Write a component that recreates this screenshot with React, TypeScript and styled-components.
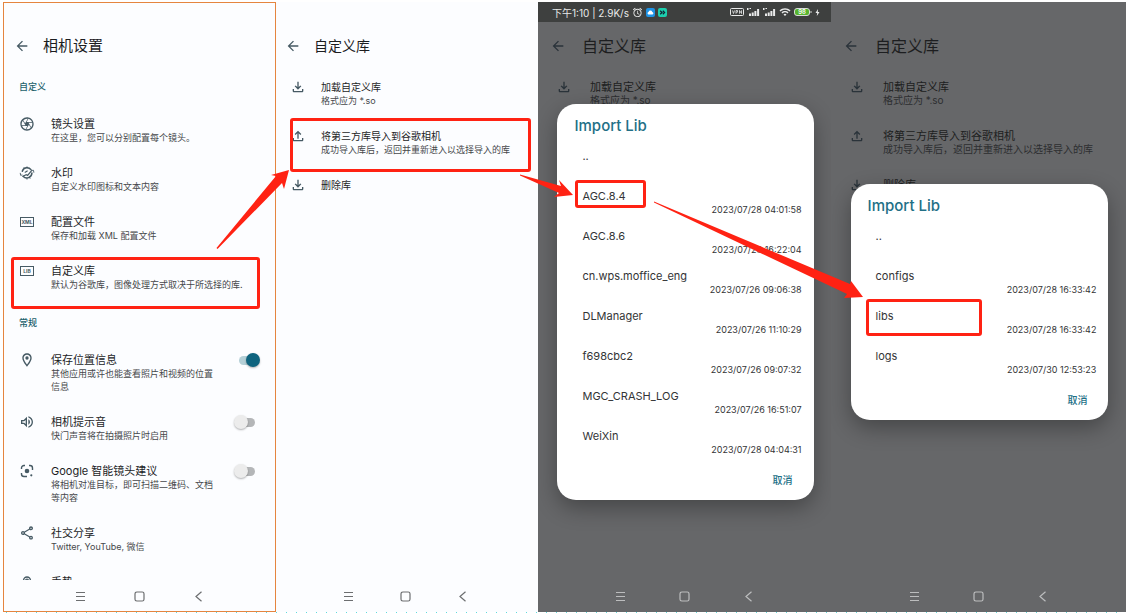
import React, { ReactNode } from "react";
import styled, { createGlobalStyle, ThemeProvider } from "styled-components";
import {
  MdArrowBack,
  MdOutlineCamera,
  MdOutlineFileDownload,
  MdOutlineFileUpload,
  MdOutlineLocationOn,
  MdOutlineShare,
  MdOutlineVolumeUp,
  MdAlarm,
  MdWifi,
} from "react-icons/md";

const RED = "#ff2213";

const GlobalStyle = createGlobalStyle`
  *, *::before, *::after { box-sizing: border-box; }
  html, body { margin: 0; background: #ffffff; }
  body { font-family: Inter, "Noto Sans CJK SC", sans-serif; }
  button { font-family: inherit; padding: 0; border: 0; background: none; cursor: pointer; }
  ul { list-style: none; margin: 0; padding: 0; }
`;

const base = {
  bg: "#fcfdff",
  text: "#1c1d1f",
  sub: "#46484b",
  icon: "#465a64",
  nav: "#6c6e70",
  frame: "transparent",
  titleSize: 14,
  itemSize: 10,
  subSize: 9,
  headPad: 9,
  headGap: 13,
  itemPad: 14,
  itemGap: 15,
  navGap: 46,
  navInset: 4,
};

const dim = {
  ...base,
  bg: "#666769",
  text: "#1d1e20",
  sub: "#2d2e30",
  icon: "#2a333a",
  nav: "#bcbdbe",
  titleSize: 16,
  itemSize: 11,
  subSize: 10,
  headPad: 12,
  headGap: 16,
  itemPad: 18,
  itemGap: 18,
  navGap: 53,
  navInset: 0,
};

const settings = {
  ...base,
  frame: "#e5853f",
  titleSize: 15,
  itemSize: 11,
  headPad: 11,
  itemPad: 16,
  itemGap: 16,
  navGap: 48,
  navInset: 0,
};

type Tone = typeof base;
const t = (key: keyof Tone) => (p: any) => p.theme[key];

const Page = styled.div`
  position: relative;
  display: flex;
  flex-direction: column;
  height: 100vh;
  padding-top: 2px;
`;

const Panels = styled.main`
  flex: 1;
  min-height: 0;
  display: grid;
  grid-template-columns: 273fr 262fr 293fr 295fr;
  grid-template-rows: minmax(0, 1fr);
  padding-left: 3px;
`;

const DottedEdge = styled.div`
  height: 1px;
  background: repeating-linear-gradient(90deg, #fff 0 6px, #5fd9dc 6px 7px, #fff 7px 10px);
`;

const Screen = styled.section`
  position: relative;
  display: flex;
  flex-direction: column;
  min-width: 0;
  overflow: hidden;
  background: ${t("bg")};
  box-shadow: inset 0 0 0 1px ${t("frame")};
`;

const StatusBar = styled.div<{ $shown: boolean }>`
  flex: none;
  height: 20px;
  display: flex;
  align-items: center;
  gap: 3px;
  padding: 0 11px 0 14px;
  background: ${(p) => (p.$shown ? "#3e403f" : "transparent")};
  color: #e9eaea;
  font-size: 10px;
  white-space: nowrap;
`;

const StatusEnd = styled.div`
  display: flex;
  align-items: center;
  gap: 3px;
  margin-left: auto;
`;

const Header = styled.header`
  flex: none;
  height: 47px;
  display: flex;
  align-items: center;
  gap: ${t("headGap")}px;
  padding-left: ${t("headPad")}px;
  color: ${t("icon")};
  button { display: flex; color: inherit; }
`;

const Title = styled.h1`
  margin: 0;
  font-size: ${t("titleSize")}px;
  line-height: 20px;
  font-weight: 400;
  color: ${t("text")};
`;

const Content = styled.div`
  flex: 1;
  min-height: 0;
  overflow: hidden;
  display: flex;
  flex-direction: column;
  gap: 3px;
`;

const Category = styled.h2`
  margin: 0;
  padding-left: 16px;
  font-size: 9px;
  line-height: 35px;
  height: 37px;
  font-weight: 500;
  color: #22616c;
`;

const Row = styled.label`
  display: flex;
  align-items: flex-start;
  gap: ${t("itemGap")}px;
  padding: 11px 15px 11px ${t("itemPad")}px;
  color: ${t("icon")};
`;

const IconSlot = styled.span`
  flex: none;
  width: 16px;
  height: 14px;
  display: flex;
  align-items: center;
  justify-content: center;
  svg { flex: none; }
`;

const RowText = styled.span`
  flex: 1;
  min-width: 0;
  display: block;
`;

const ItemTitle = styled.span`
  display: block;
  font-size: ${t("itemSize")}px;
  line-height: 14px;
  color: ${t("text")};
`;

const ItemSub = styled.span`
  display: block;
  font-size: ${t("subSize")}px;
  line-height: 13px;
  color: ${t("sub")};
`;

const Tag = styled.span`
  width: 14px;
  height: 10px;
  border: 1px solid currentColor;
  font-size: 5px;
  line-height: 8px;
  font-weight: 700;
  text-align: center;
`;

const Toggle = styled.input`
  appearance: none;
  position: relative;
  flex: none;
  width: 27px;
  height: 14px;
  margin: 0;
  &::before {
    content: "";
    position: absolute;
    inset: 3px 6px 2px 5px;
    border-radius: 5px;
    background: #b4b6b8;
  }
  &::after {
    content: "";
    position: absolute;
    left: 0;
    top: 0;
    width: 14px;
    height: 14px;
    border-radius: 50%;
    background: #ececec;
    box-shadow: 0 1px 2px rgba(0, 0, 0, 0.3);
  }
  &:checked::before { background: #b5d0d7; }
  &:checked::after { left: 12px; background: #0f647f; }
`;

const NavBar = styled.nav`
  flex: none;
  height: 32px;
  display: flex;
  align-items: center;
  justify-content: center;
  gap: ${t("navGap")}px;
  padding-right: ${t("navInset")}px;
  color: ${t("nav")};
  button { display: flex; color: inherit; }
`;

const Scrim = styled.div`
  position: absolute;
  inset: 0 0 10px 2px;
  display: flex;
  align-items: center;
  justify-content: center;
`;

const Dialog = styled.div`
  width: 88%;
  border-radius: 19px;
  background: #ffffff;
  box-shadow: 0 8px 22px rgba(0, 0, 0, 0.32);
`;

const DialogTitle = styled.h2`
  margin: 0;
  height: 45px;
  padding-left: 17px;
  font-size: 15px;
  line-height: 44px;
  font-weight: 500;
  color: #226f86;
`;

const FileRow = styled.li`
  height: 40px;
  padding: 0 12px 0 25px;
  color: #333436;
  button {
    display: block;
    width: 100%;
    font-size: 11px;
    line-height: 14px;
    text-align: left;
    color: inherit;
  }
  time {
    display: block;
    font-size: 9px;
    line-height: 13px;
    text-align: right;
  }
`;

const DialogActions = styled.div`
  height: 31px;
  display: flex;
  justify-content: flex-end;
  align-items: flex-start;
  padding: 4px 21px 0 0;
  button {
    font-size: 10px;
    line-height: 14px;
    font-weight: 500;
    color: #226f86;
  }
`;

const Annotations = styled.svg`
  position: absolute;
  inset: 0;
  width: 100%;
  height: 100%;
  pointer-events: none;
`;

const WatermarkIcon = () => (
  <svg width="16" height="16" viewBox="0 0 16 16" fill="none" stroke="currentColor" strokeLinecap="round">
    <path d="M3.300 6.300A5 5 0 0 1 12 4.600M12.900 8a5 5 0 0 1-8.800 3.200" strokeWidth="1.500" />
    <path d="M4 11.200 7.200 9.600 8.600 10.400 12.600 5.600M6.200 7.200 8.200 6" strokeWidth="1.200" />
    <path d="M1.300 8.300 1.600 10.300 3 10M14.800 7.300 14.500 5.300 13.200 5.400" strokeWidth=".9" />
    <path d="M5 2.600 5.600 3.600M8 1.800V3M11 13.400 10.400 12.400M8 14.200V13" strokeWidth=".9" />
  </svg>
);

const LensIcon = () => (
  <svg width="16" height="16" viewBox="0 0 16 16" fill="none" stroke="currentColor" strokeWidth="1.400">
    <path d="M2.500 6V5a2.500 2.500 0 0 1 2.500-2.500H6M10 2.500h1A2.500 2.500 0 0 1 13.500 5v2M2.500 10v1A2.500 2.500 0 0 0 5 13.500h3" />
    <circle cx="8" cy="8" r="2.300" fill="currentColor" stroke="none" />
    <circle cx="12.300" cy="12.300" r="1.100" fill="currentColor" stroke="none" />
  </svg>
);

const DomeIcon = () => (
  <svg width="16" height="16" viewBox="0 0 16 16" fill="none" stroke="currentColor" strokeWidth="1.300">
    <path d="M4.500 6.500a3.500 3.500 0 0 1 7 0v5h-7z" />
    <circle cx="8" cy="6.500" r="1.400" />
  </svg>
);

const CloudBadge = () => (
  <svg width="9" height="9" viewBox="0 0 9 9">
    <rect width="9" height="9" rx="2" fill="#1e93e6" />
    <path d="M2.500 6.500a1.300 1.300 0 0 1 0-2.500 2 2 0 0 1 3.800 0 1.300 1.300 0 0 1 .2 2.500z" fill="#fff" />
  </svg>
);

const ForwardBadge = () => (
  <svg width="9" height="9" viewBox="0 0 9 9">
    <rect width="9" height="9" rx="2" fill="#1ccfae" />
    <path d="m2.200 2.800 1.800 1.700-1.800 1.700M4.800 2.800l1.800 1.700-1.800 1.700" fill="none" stroke="#123" strokeWidth="1.200" />
  </svg>
);

const VpnIcon = () => (
  <svg width="14" height="8" viewBox="0 0 14 8" fill="none" stroke="currentColor">
    <rect x=".5" y=".5" width="13" height="7" rx="1" />
    <path d="m2.500 2.500 1 3 1-3M6 5.700V2.500h1.500v1.700H6M9.500 5.700V2.500l2 3V2.300" strokeWidth=".8" />
  </svg>
);

const SignalIcon = () => (
  <svg width="13" height="10" viewBox="0 0 13 10" fill="currentColor">
    <path d="M0 1h1.500v2H0zM2.500 1H4v1H2.500zM2 6.500h2V9H2zM4.700 5.500h2V9h-2zM7.400 4h2v5h-2zM10.100 2h2v7h-2z" />
  </svg>
);

const BatteryIcon = () => (
  <svg width="18" height="8" viewBox="0 0 18 8">
    <rect x=".5" y=".5" width="15" height="7" rx="2.500" fill="#57b52e" stroke="#d8dcd8" />
    <path d="M17 3v2" stroke="#d8dcd8" />
    <text x="8" y="6" fontSize="6" fontWeight="600" textAnchor="middle" fill="#fff">98</text>
  </svg>
);

const BoltIcon = () => (
  <svg width="5" height="7" viewBox="0 0 5 7" fill="currentColor">
    <path d="M3 0 .5 4H2.200L1.800 7 4.500 3H2.800z" />
  </svg>
);

const Navigation = () => (
  <NavBar aria-label="系统导航">
    <button aria-label="菜单">
      <svg width="11" height="11" viewBox="0 0 11 11" stroke="currentColor">
        <path d="M1 1.500h9M1 5.500h9M1 9.500h9" />
      </svg>
    </button>
    <button aria-label="主页">
      <svg width="11" height="11" viewBox="0 0 11 11" fill="none" stroke="currentColor" strokeWidth="1.200">
        <rect x="1" y="1" width="9" height="9" rx="1.800" />
      </svg>
    </button>
    <button aria-label="后退">
      <svg width="11" height="11" viewBox="0 0 11 11" fill="none" stroke="currentColor" strokeWidth="1.200">
        <path d="M8.500.8 3 5.500l5.500 4.700" />
      </svg>
    </button>
  </NavBar>
);

interface ItemData {
  icon: ReactNode;
  title: string;
  sub?: string;
  toggle?: boolean;
}

const Item = ({ icon, title, sub, toggle }: ItemData) => (
  <Row as={toggle === undefined ? "div" : "label"}>
    <IconSlot>{icon}</IconSlot>
    <RowText>
      <ItemTitle>{title}</ItemTitle>
      {sub && <ItemSub>{sub}</ItemSub>}
    </RowText>
    {toggle !== undefined && <Toggle type="checkbox" defaultChecked={toggle} />}
  </Row>
);

interface PhoneProps {
  theme: Tone;
  title: string;
  status?: ReactNode;
  dialog?: ReactNode;
  children: ReactNode;
}

const Phone = ({ theme, title, status, dialog, children }: PhoneProps) => (
  <ThemeProvider theme={theme}>
    <Screen>
      <StatusBar $shown={Boolean(status)}>{status}</StatusBar>
      <Header>
        <button aria-label="返回"><MdArrowBack size={16} /></button>
        <Title>{title}</Title>
      </Header>
      <Content>{children}</Content>
      <Navigation />
      {dialog && <Scrim>{dialog}</Scrim>}
    </Screen>
  </ThemeProvider>
);

const customItems: ItemData[] = [
  { icon: <MdOutlineCamera size={16} />, title: "镜头设置", sub: "在这里，您可以分别配置每个镜头。" },
  { icon: <WatermarkIcon />, title: "水印", sub: "自定义水印图标和文本内容" },
  { icon: <Tag>XML</Tag>, title: "配置文件", sub: "保存和加载 XML 配置文件" },
  { icon: <Tag>LIB</Tag>, title: "自定义库", sub: "默认为谷歌库，图像处理方式取决于所选择的库." },
];

const generalItems: ItemData[] = [
  { icon: <MdOutlineLocationOn size={16} />, title: "保存位置信息", sub: "其他应用或许也能查看照片和视频的位置信息", toggle: true },
  { icon: <MdOutlineVolumeUp size={16} />, title: "相机提示音", sub: "快门声音将在拍摄照片时启用", toggle: false },
  { icon: <LensIcon />, title: "Google 智能镜头建议", sub: "将相机对准目标，即可扫描二维码、文档等内容", toggle: false },
  { icon: <MdOutlineShare size={16} />, title: "社交分享", sub: "Twitter, YouTube, 微信" },
  { icon: <DomeIcon />, title: "手势" },
];

const libraryItems: ItemData[] = [
  { icon: <MdOutlineFileDownload size={16} />, title: "加载自定义库", sub: "格式应为 *.so" },
  { icon: <MdOutlineFileUpload size={16} />, title: "将第三方库导入到谷歌相机", sub: "成功导入库后，返回并重新进入以选择导入的库" },
  { icon: <MdOutlineFileDownload size={16} />, title: "删除库" },
];

const ItemList = ({ items }: { items: ItemData[] }) => (
  <div>
    {items.map((item) => <Item key={item.title} {...item} />)}
  </div>
);

const ImportDialog = ({ files }: { files: [string, string?][] }) => (
  <Dialog role="dialog" aria-label="Import Lib">
    <DialogTitle>Import Lib</DialogTitle>
    <ul>
      {files.map(([name, date]) => (
        <FileRow key={name}>
          <button>{name}</button>
          {date && <time>{date}</time>}
        </FileRow>
      ))}
    </ul>
    <DialogActions><button>取消</button></DialogActions>
  </Dialog>
);

export default function App() {
  return (
    <Page>
      <GlobalStyle />
      <Panels>
        <Phone theme={settings} title="相机设置">
          <div>
            <Category>自定义</Category>
            <ItemList items={customItems} />
          </div>
          <div>
            <Category>常规</Category>
            <ItemList items={generalItems} />
          </div>
        </Phone>

        <Phone theme={base} title="自定义库">
          <ItemList items={libraryItems} />
        </Phone>

        <Phone
          theme={dim}
          title="自定义库"
          status={
            <>
              <span>下午1:10 | 2.9K/s</span>
              <MdAlarm size={11} />
              <CloudBadge />
              <ForwardBadge />
              <StatusEnd>
                <VpnIcon />
                <SignalIcon />
                <SignalIcon />
                <MdWifi size={12} />
                <BatteryIcon />
                <BoltIcon />
              </StatusEnd>
            </>
          }
          dialog={
            <ImportDialog
              files={[
                [".."],
                ["AGC.8.4", "2023/07/28 04:01:58"],
                ["AGC.8.6", "2023/07/28 16:22:04"],
                ["cn.wps.moffice_eng", "2023/07/26 09:06:38"],
                ["DLManager", "2023/07/26 11:10:29"],
                ["f698cbc2", "2023/07/26 09:07:32"],
                ["MGC_CRASH_LOG", "2023/07/26 16:51:07"],
                ["WeiXin", "2023/07/28 04:04:31"],
              ]}
            />
          }
        >
          <ItemList items={libraryItems} />
        </Phone>

        <Phone
          theme={dim}
          title="自定义库"
          dialog={
            <ImportDialog
              files={[
                [".."],
                ["configs", "2023/07/28 16:33:42"],
                ["libs", "2023/07/28 16:33:42"],
                ["logs", "2023/07/30 12:53:23"],
              ]}
            />
          }
        >
          <ItemList items={libraryItems} />
        </Phone>
      </Panels>
      <DottedEdge />

      <Annotations viewBox="0 0 1126 613" preserveAspectRatio="none" aria-hidden="true">
        <g fill="none" stroke={RED} strokeWidth="3">
          <rect x="12.500" y="258.500" width="246" height="49" rx="1.500" />
          <rect x="291.500" y="119.500" width="238" height="51" rx="1.500" />
          <rect x="576.500" y="181.500" width="68" height="25" rx="1.500" />
          <rect x="867.500" y="300.500" width="113" height="34" rx="1.500" />
        </g>
        <g fill={RED}>
          <path d="M216.500 248 276 176 271 175 289 170 284 189 282 183 217.500 249z" />
          <path d="M520 174.500 561 186 559 180 573 195 554 197 559 193 520 175.500z" />
          <path d="M654 201.500 850 284 851 281 863 297 844 298 847 294 654 202.500z" />
        </g>
      </Annotations>
    </Page>
  );
}
